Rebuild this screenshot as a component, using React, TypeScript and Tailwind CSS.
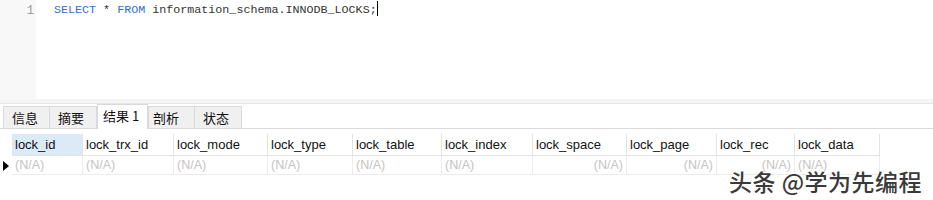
import React from "react";

const cols: { name: string; w: number; right?: boolean }[] = [
  { name: "lock_id", w: 71 },
  { name: "lock_trx_id", w: 91 },
  { name: "lock_mode", w: 94 },
  { name: "lock_type", w: 85 },
  { name: "lock_table", w: 89 },
  { name: "lock_index", w: 91 },
  { name: "lock_space", w: 94, right: true },
  { name: "lock_page", w: 90, right: true },
  { name: "lock_rec", w: 78, right: true },
  { name: "lock_data", w: 85 },
];

const tabs = ["信息", "摘要", "结果 1", "剖析", "状态"];

export default function App() {
  return (
    <div className="relative w-[933px] h-[200px] bg-white overflow-hidden" style={{ fontFamily: '"Liberation Sans", "Noto Sans CJK SC", sans-serif' }}>
      {/* Editor */}
      <div className="flex h-[99px]">
        <div className="w-[36px] bg-[#f8f8f8] text-right pr-[2px] pt-[2px] text-[12px] text-[#9a9a9a]" style={{ fontFamily: '"Liberation Mono", monospace' }}>
          1
        </div>
        <div className="pl-[18px] pt-[2px] text-[11.7px] leading-[16px] text-[#333]" style={{ fontFamily: '"Liberation Mono", monospace' }}>
          <span className="text-[#2a6fd6]">SELECT</span> * <span className="text-[#2a6fd6]">FROM</span> information_schema.INNODB_LOCKS;
          <span className="inline-block w-[1px] h-[15px] bg-black align-middle -mt-[2px]" />
        </div>
      </div>
      {/* splitter */}
      <div className="h-[5px] bg-[#f4f4f4] border-b border-[#e6e6e6]" />
      {/* Tabs */}
      <div className="flex items-end h-[25px] pl-[3px] border-b border-[#dadada]" style={{ fontFamily: '"Noto Sans CJK SC", sans-serif' }}>
        {tabs.map((t, i) =>
          i === 2 ? (
            <div key={t} className="w-[51px] h-[25px] bg-white border-x border-t border-[#dadada] -mb-[1px] pl-[5px] pt-[1px] text-[13px] leading-[20px] text-[#111]">
              {t}
            </div>
          ) : (
            <div key={t} className={`w-[47px] h-[22px] bg-[#f0f0f0] border-t border-[#dadada] ${i === 0 || i === 3 ? "border-l" : ""} border-r text-[13px] leading-[22px] text-[#111] ${i === 3 ? "pl-[4px]" : "pl-[8px]"}`}>
              {t}
            </div>
          )
        )}
      </div>
      {/* Grid */}
      <div className="mt-[5px]">
        <div className="flex h-[22px]">
          <div className="w-[12px]" />
          {cols.map((c, i) => (
            <div key={c.name} className={`shrink-0 border-r border-b border-[#e3e3e3] pl-[3px] text-[13px] leading-[22px] text-[#111] ${i === 0 ? "bg-[#dce9f7]" : ""}`} style={{ width: c.w }}>
              {c.name}
            </div>
          ))}
        </div>
        <div className="flex h-[19px]">
          <div className="w-[12px] flex items-center pl-[3px]">
            <svg width="6" height="10" viewBox="0 0 6 10"><path d="M0 0 L6 5 L0 10 Z" fill="#000" /></svg>
          </div>
          {cols.map((c) => (
            <div key={c.name} className={`shrink-0 border-r border-b border-[#ececec] px-[3px] text-[12.5px] leading-[18px] text-[#c4c4c4] ${c.right ? "text-right" : ""}`} style={{ width: c.w }}>
              (N/A)
            </div>
          ))}
        </div>
      </div>
      {/* Watermark */}
      <div className="absolute left-[729px] top-[166px] text-[23px] leading-[30px] font-medium text-[#3a3a3a] tracking-[0.5px]" style={{ fontFamily: '"Noto Sans CJK SC", sans-serif', textShadow: "0 0 2px #fff, 0 0 2px #fff, 1px 1px 0 #fff" }}>
        头条 @学为先编程
      </div>
    </div>
  );
}
